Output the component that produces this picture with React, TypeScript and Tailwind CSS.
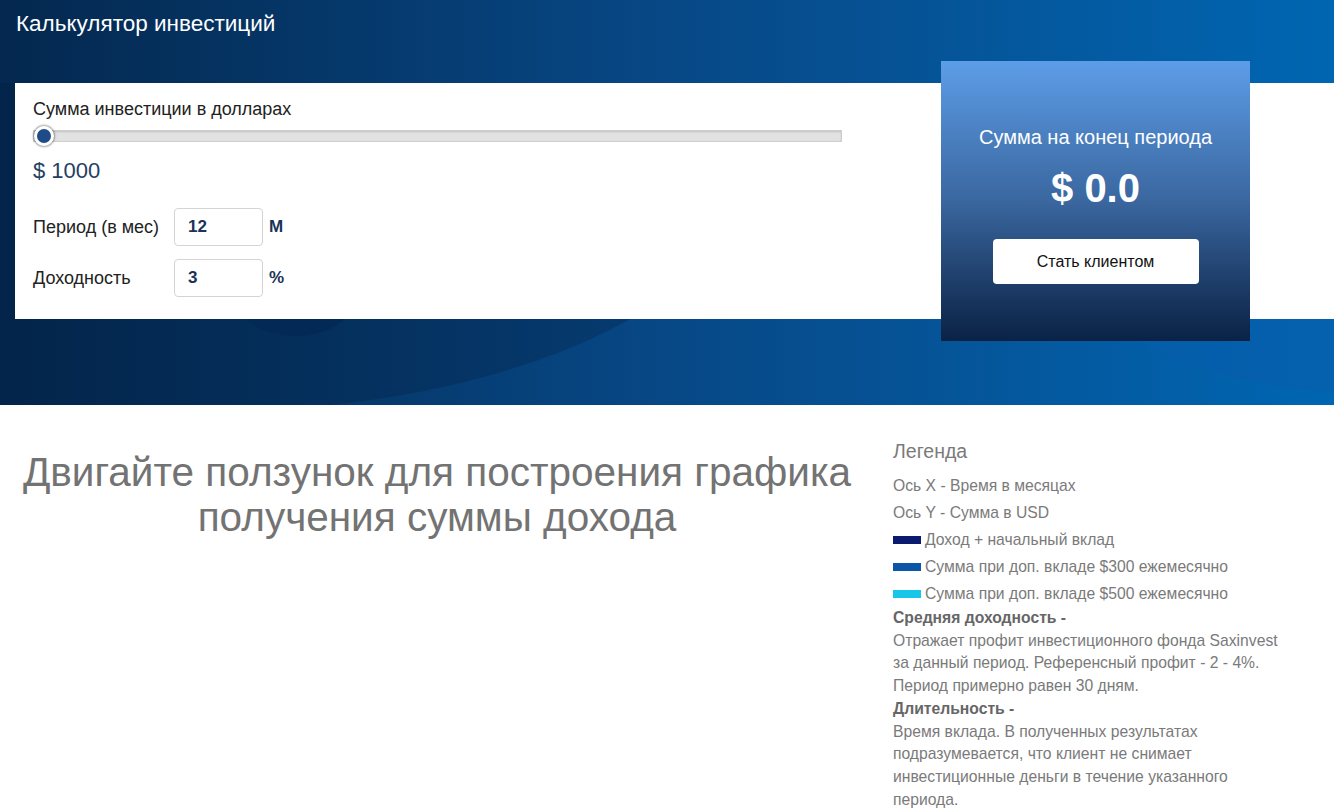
import React from "react";

const legendItems = [
  { color: "bg-[#0a1a6e]", label: "Доход + начальный вклад" },
  { color: "bg-[#0b56a6]", label: "Сумма при доп. вкладе $300 ежемесячно" },
  { color: "bg-[#17c6e8]", label: "Сумма при доп. вкладе $500 ежемесячно" },
];

function Field({ label, value, unit }: { label: string; value: string; unit: string }) {
  return (
    <div className="flex items-center h-[38px]">
      <span className="w-[141px] text-[18px] text-[#222]">{label}</span>
      <div className="w-[89px] h-[38px] border border-[#d4d4d4] rounded-[4px] flex items-center pl-[13px] text-[17px] font-bold text-[#1a3358]">
        {value}
      </div>
      <span className="ml-[6px] text-[17px] font-bold text-[#1a3358]">{unit}</span>
    </div>
  );
}

export default function App() {
  return (
    <div className="w-[1334px] min-h-[812px] bg-white font-['Liberation_Sans',Arial,sans-serif]">
      <div className="relative h-[405px] overflow-hidden bg-gradient-to-r from-[#04284f] via-[#074886] to-[#0066b2]">
        <svg className="absolute inset-0 pointer-events-none" width="1334" height="405" viewBox="0 0 1334 405">
          <path d="M0 83 L700 83 L690 280 Q 560 380 330 405 L0 405 Z" fill="#021d3d" opacity="0.28" />
          <ellipse cx="295" cy="298" rx="60" ry="38" fill="#032a55" opacity="0.9" />
          <path d="M1100 318 Q 1200 385 1334 392 L1334 300 L1100 300 Z" fill="#0a5cac" opacity="0.55" />
        </svg>
        <div className="relative">
          <h1 className="pl-[16px] pt-[10px] text-[22.5px] leading-[28px] text-white">Калькулятор инвестиций</h1>
          <div className="mt-[45px] ml-[15px] h-[236px] bg-white flex">
            <div className="w-[926px] pl-[18px] pt-[16px]">
              <div className="text-[18px] leading-[20px] text-[#222]">Сумма инвестиции в долларах</div>
              <div className="relative mt-[11px] w-[809px] h-[12px] bg-[#e2e2e2] border border-[#cfcfcf] shadow-[inset_0_1px_2px_rgba(0,0,0,0.15)]">
                <div className="absolute left-[0px] top-[-5px] w-[20px] h-[20px] rounded-full bg-[#1f4c86] border-[3px] border-white shadow-[0_0_2px_1px_rgba(0,0,0,0.35)]" />
              </div>
              <div className="mt-[17px] text-[22px] leading-[24px] text-[#243f63]">$ 1000</div>
              <div className="mt-[25px] flex flex-col gap-[13px]">
                <Field label="Период (в мес)" value="12" unit="М" />
                <Field label="Доходность" value="3" unit="%" />
              </div>
            </div>
            <div className="w-[309px] -mt-[22px] -mb-[22px] bg-gradient-to-b from-[#5d9de8] via-[#3a679f] to-[#0b2246] flex flex-col items-center">
              <div className="mt-[64px] text-[20px] leading-[24px] text-white">Сумма на конец периода</div>
              <div className="mt-[16px] text-[40px] leading-[46px] font-bold text-white">$ 0.0</div>
              <button className="mt-[28px] w-[206px] h-[45px] bg-white rounded-[4px] text-[16px] text-[#111]">
                Стать клиентом
              </button>
            </div>
            <div className="flex-1" />
          </div>
        </div>
      </div>
      <div className="flex">
        <div className="w-[874px] pt-[45px] text-center text-[40.5px] leading-[45px] text-[#737373]">
          Двигайте ползунок для построения графика
          <br />
          получения суммы дохода
        </div>
        <div className="pl-[19px] pt-[35px] text-[#7a7a7a]">
          <div className="text-[19.5px] leading-[22px]">Легенда</div>
          <div className="mt-[10px] text-[15.7px] leading-[27px]">
            <div>Ось X - Время в месяцах</div>
            <div>Ось Y - Сумма в USD</div>
            {legendItems.map((item) => (
              <div key={item.label} className="flex items-center">
                <span className={`inline-block w-[28px] h-[8px] mr-[4px] ${item.color}`} />
                {item.label}
              </div>
            ))}
          </div>
          <div className="w-[400px] text-[15.7px] leading-[22.7px]">
            <div className="font-bold text-[#666]">Средняя доходность -</div>
            <div>
              Отражает профит инвестиционного фонда Saxinvest за данный период. Референсный профит - 2 - 4%.
              Период примерно равен 30 дням.
            </div>
            <div className="font-bold text-[#666]">Длительность -</div>
            <div>
              Время вклада. В полученных результатах подразумевается, что клиент не снимает инвестиционные деньги в
              течение указанного периода.
            </div>
          </div>
        </div>
      </div>
    </div>
  );
}
